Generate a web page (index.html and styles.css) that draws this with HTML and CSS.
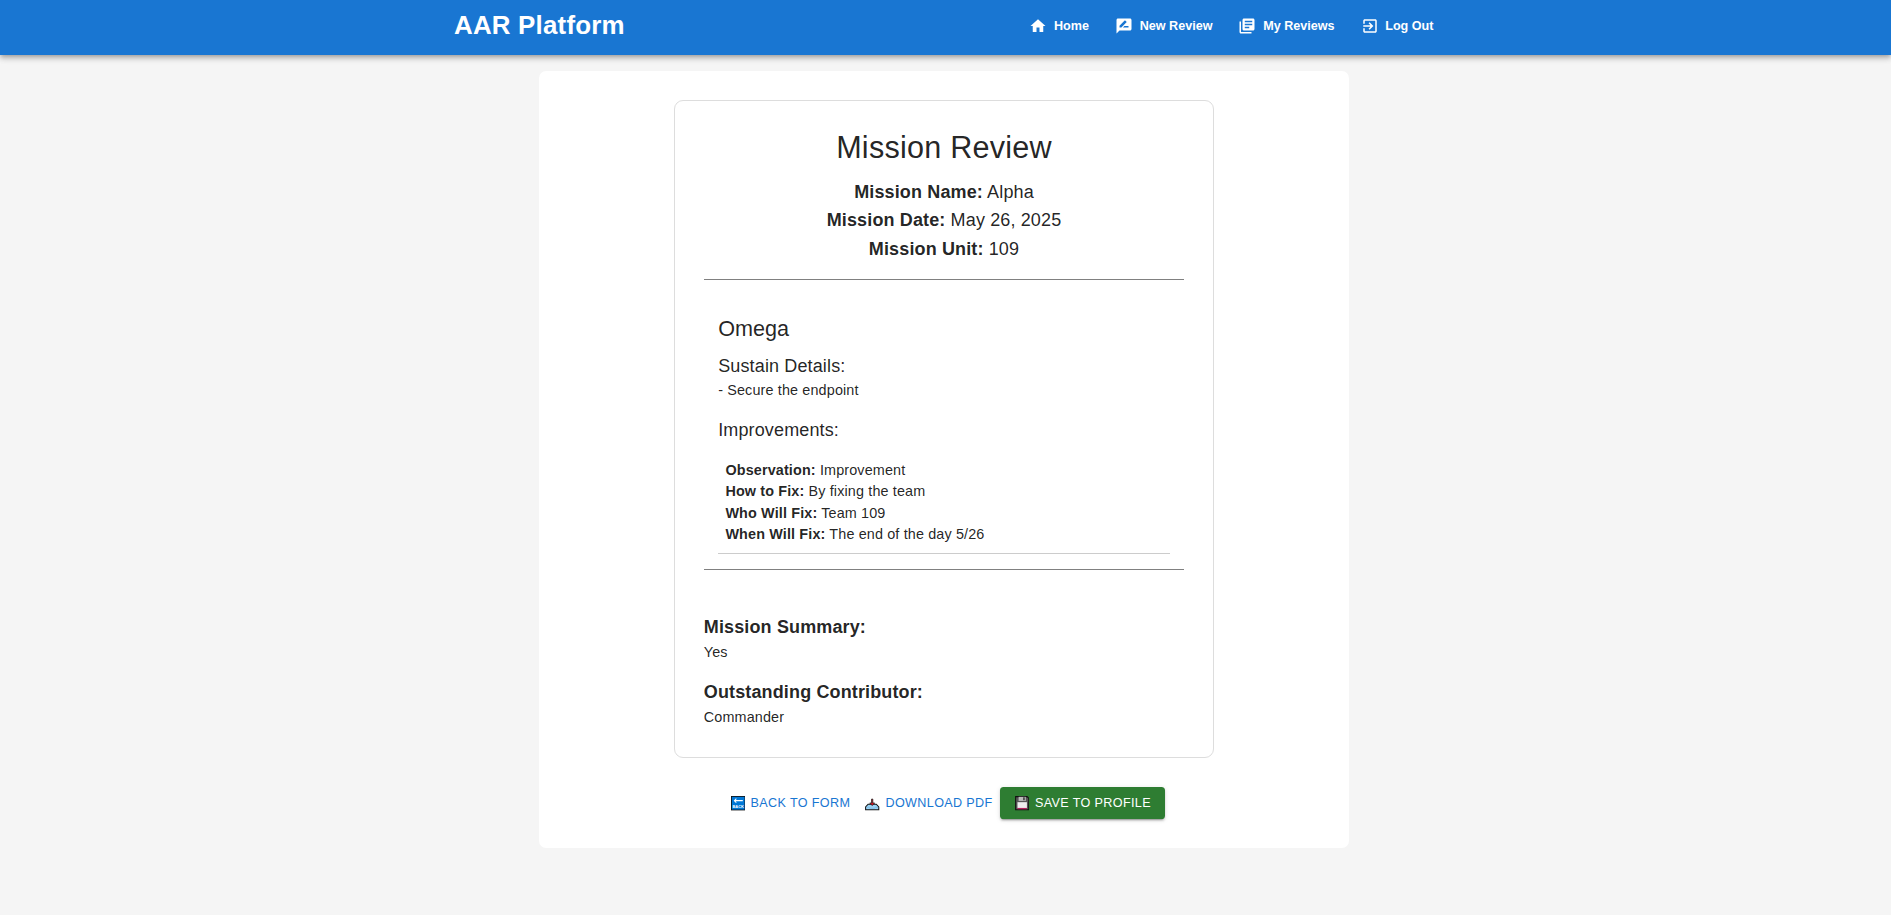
FILE: index.html
```html
<!DOCTYPE html>
<html lang="en">
<head>
<meta charset="utf-8">
<title>AAR Platform</title>
<link rel="stylesheet" href="styles.css">
</head>
<body>
<header class="app-bar">
  <div class="toolbar">
    <div class="brand">AAR Platform</div>
    <nav class="nav">
      <a class="nav-link"><svg class="nav-icon" viewBox="0 0 24 24"><path d="M10 20v-6h4v6h5v-8h3L12 3 2 12h3v8z"/></svg>Home</a>
      <a class="nav-link"><svg class="nav-icon" viewBox="0 0 24 24"><path d="M20 2H4c-1.1 0-1.99.9-1.99 2L2 22l4-4h14c1.1 0 2-.9 2-2V4c0-1.1-.9-2-2-2zM6 14v-2.47l6.88-6.88c.2-.2.51-.2.71 0l1.77 1.77c.2.2.2.51 0 .71L8.47 14H6zm12 0h-7.5l2-2H18v2z"/></svg>New Review</a>
      <a class="nav-link"><svg class="nav-icon" viewBox="0 0 24 24"><path d="M4 6H2v14c0 1.1.9 2 2 2h14v-2H4V6zm16-4H8c-1.1 0-2 .9-2 2v12c0 1.1.9 2 2 2h12c1.1 0 2-.9 2-2V4c0-1.1-.9-2-2-2zm-1 9H9V9h10v2zm-4 4H9v-2h6v2zm4-8H9V5h10v2z"/></svg>My Reviews</a>
      <a class="nav-link"><svg class="nav-icon" viewBox="0 0 24 24"><path d="M10.09 15.59 11.5 17l5-5-5-5-1.41 1.41L12.67 11H3v2h9.67l-2.58 2.59zM19 3H5c-1.11 0-2 .9-2 2v4h2V5h14v14H5v-4H3v4c0 1.1.89 2 2 2h14c1.1 0 2-.9 2-2V5c0-1.1-.9-2-2-2z"/></svg>Log Out</a>
    </nav>
  </div>
</header>
<main class="page">
  <article class="review">
    <h1 class="title">Mission Review</h1>
    <p class="meta"><strong>Mission Name:</strong> Alpha</p>
    <p class="meta"><strong>Mission Date:</strong> May 26, 2025</p>
    <p class="meta"><strong>Mission Unit:</strong> 109</p>
    <hr class="rule">
    <section class="team">
      <h2 class="team-name">Omega</h2>
      <h3 class="subhead">Sustain Details:</h3>
      <p class="body">- Secure the endpoint</p>
      <h3 class="subhead spaced">Improvements:</h3>
      <div class="improvement">
        <p class="body"><strong>Observation:</strong> Improvement</p>
        <p class="body"><strong>How to Fix:</strong> By fixing the team</p>
        <p class="body"><strong>Who Will Fix:</strong> Team 109</p>
        <p class="body"><strong>When Will Fix:</strong> The end of the day 5/26</p>
      </div>
    </section>
    <hr class="rule">
    <section class="summary">
      <h3 class="subhead strong">Mission Summary:</h3>
      <p class="body">Yes</p>
      <h3 class="subhead strong spaced">Outstanding Contributor:</h3>
      <p class="body">Commander</p>
    </section>
  </article>
  <div class="actions">
    <button class="btn"><svg class="emoji" viewBox="0 0 14 14"><path fill="#111" d="M0 0h14v14H0z"/><path fill="#0078d7" d="M.8.8h12.4v12.4H.8z"/><path d="M11.5 4.5h-8M5.2 2.6 3.3 4.5l1.9 1.9" fill="none" stroke="#fff"/><text class="emoji-text" x="7" y="11.8">BACK</text></svg>BACK TO FORM</button>
    <button class="btn"><svg class="emoji" viewBox="0 0 14 14"><path d="M3 8h8l2.4 2.6v2.8H.6v-2.8z" fill="#9bd3f5" stroke="#111"/><path d="M1.2 11h2.6l1 .9h4.4l1-.9h2.6" fill="none" stroke="#6fb0dc" stroke-width=".6"/><path d="M6.4 3h1.2v3.8h1.8L7 9.3 4.6 6.8h1.8z" fill="#e81224" stroke="#222" stroke-width=".8"/></svg>DOWNLOAD PDF</button>
    <button class="btn btn-save"><svg class="emoji" viewBox="0 0 14 14"><path d="M.6.6h11.2l1.6 1.6v11.2H.6z" fill="#555" stroke="#111"/><path d="M3.5.8h7v4h-7z" fill="#bbb"/><path d="M8 1.2h1.4v2.9H8z" fill="#333"/><path d="M2.4 6h9.2v6H2.4z" fill="#eee"/><path d="M2.4 11.6h9.2v1.3H2.4z" fill="#b5235e"/></svg>SAVE TO PROFILE</button>
  </div>
</main>
</body>
</html>
```
FILE: styles.css
```css
* { box-sizing: border-box; }
body {
  margin: 0;
  background: #f5f5f5;
  color: rgba(0, 0, 0, 0.87);
  font-family: "Liberation Sans", Arial, sans-serif;
  font-size: 14.4px;
}
h1, h2, h3, p { margin: 0; font-weight: 400; }
.app-bar {
  height: 55px;
  padding-right: 3px;
  background: #1976d2;
  color: #fff;
  box-shadow: 0 2px 4px -1px rgba(0,0,0,.2), 0 4px 5px rgba(0,0,0,.14), 0 1px 9px rgba(0,0,0,.12);
}
.toolbar {
  width: 980px;
  height: 51px;
  margin: 0 auto;
  display: flex;
  align-items: center;
  justify-content: space-between;
}
.brand { font-size: 25.92px; font-weight: 700; letter-spacing: 0.0075em; line-height: 1.6; }
.nav { display: flex; gap: 26px; padding-right: 0.5px; }
.nav-link { display: flex; align-items: center; gap: 6.7px; font-size: 12.6px; font-weight: 700; line-height: 18px; }
.nav-icon { width: 18px; height: 18px; fill: currentColor; }
.page {
  width: 810px;
  margin: 16px auto 0;
  padding: 28.8px;
  background: #fff;
  border-radius: 7.2px;
  position: relative;
  left: -1.5px;
}
.review {
  width: 540px;
  margin: 0 auto;
  padding: 28.8px;
  border: 1px solid #ddd;
  border-radius: 9px;
}
.title { font-size: 30.6px; line-height: 1.235; letter-spacing: 0.00735em; margin: -1px 0 11.3px; text-align: center; }
.meta { font-size: 18px; line-height: 1.6; letter-spacing: 0.0075em; text-align: center; }
.rule { height: 1px; margin: 14.9px 0 14.3px; border: 0; background: #808080; }
.team { padding: 21px 14.4px 0; }
.team-name { font-size: 21.6px; line-height: 1.334; margin-bottom: 0.35em; }
.subhead { font-size: 18px; line-height: 1.6; letter-spacing: 0.0075em; }
.strong { font-weight: 700; }
.spaced { margin-top: 14.4px; }
.body { font-size: 14.4px; line-height: 1.5; letter-spacing: 0.00938em; }
.improvement { margin-top: 7.2px; padding: 7.2px 7.2px 7px; border-bottom: 1px solid #ccc; }
.summary { padding-top: 29px; }
.actions { display: flex; justify-content: center; margin-top: 28.8px; }
.btn {
  display: flex;
  align-items: center;
  height: 32.4px;
  padding: 0 7.2px;
  border: 0;
  border-radius: 3.6px;
  background: transparent;
  color: #1976d2;
  font: 400 12.6px/22px "Liberation Sans", Arial, sans-serif;
  letter-spacing: 0.02857em;
}
.btn-save {
  padding: 0 14.4px;
  background: #2e7d32;
  color: #fff;
  box-shadow: 0 3px 1px -2px rgba(0,0,0,.2), 0 2px 2px rgba(0,0,0,.14), 0 1px 5px rgba(0,0,0,.12);
}
.emoji { width: 14.4px; height: 14.4px; margin: 1px 5.7px 0 0.7px; }
.emoji-text { font: 700 3.8px "Liberation Sans", Arial, sans-serif; letter-spacing: 0; fill: #fff; text-anchor: middle; }
```
